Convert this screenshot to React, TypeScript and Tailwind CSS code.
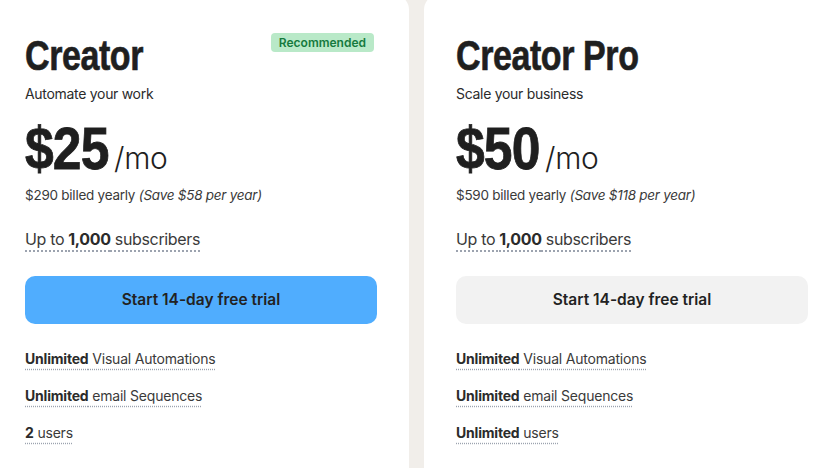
import React from 'react';

type Plan = {
  name: string;
  tagline: string;
  price: string;
  yearly: string;
  save: string;
  recommended?: boolean;
  primary?: boolean;
  features: [string, string][];
};

const plans: Plan[] = [
  {
    name: 'Creator',
    tagline: 'Automate your work',
    price: '$25',
    yearly: '$290 billed yearly',
    save: '(Save $58 per year)',
    recommended: true,
    primary: true,
    features: [
      ['Unlimited', 'Visual Automations'],
      ['Unlimited', 'email Sequences'],
      ['2', 'users'],
    ],
  },
  {
    name: 'Creator Pro',
    tagline: 'Scale your business',
    price: '$50',
    yearly: '$590 billed yearly',
    save: '(Save $118 per year)',
    features: [
      ['Unlimited', 'Visual Automations'],
      ['Unlimited', 'email Sequences'],
      ['Unlimited', 'users'],
    ],
  },
];

const body = "font-['Inter','Liberation_Sans',sans-serif]";
const heading = "font-['Liberation_Sans','Arial',sans-serif]";

function PlanCard({ plan }: { plan: Plan }) {
  return (
    <div className="relative w-[416px] shrink-0 bg-white rounded-t-[16px] px-8 pt-[41px] h-[520px]">
      {plan.recommended && (
        <span className="absolute right-[35px] top-[39px] rounded-[4px] bg-[#b9e9c8] px-2 py-[2px] text-[12px] font-semibold text-[#167a3e] leading-[15px]">
          Recommended
        </span>
      )}
      <h2
        className={`${heading} inline-block origin-left scale-x-[0.79] whitespace-nowrap text-[43px] font-bold leading-[40px] tracking-[-0.5px] text-[#1f1f1f] [-webkit-text-stroke:0.7px_#1f1f1f]`}
      >
        {plan.name}
      </h2>
      <p className="mt-[8px] text-[14px] leading-[20px] tracking-[-0.3px] text-[#2b2b2b]">{plan.tagline}</p>

      <div className="mt-[14px] flex items-baseline">
        <span
          className={`${heading} inline-block w-[84px] origin-left scale-x-[0.86] whitespace-nowrap text-[60px] font-bold leading-[62px] tracking-[-1px] text-[#1f1f1f] [-webkit-text-stroke:0.8px_#1f1f1f]`}
        >
          {plan.price}
        </span>
        <span className="ml-[5px] text-[30px] font-light tracking-[-0.3px] text-[#1f1f1f]">/mo</span>
      </div>
      <p className="mt-[4px] text-[13.5px] leading-[20px] tracking-[-0.25px] text-[#3a3a3a]">
        {plan.yearly} <span className="italic">{plan.save}</span>
      </p>

      <p className="mt-[24px] text-[16px] leading-[20px] tracking-[-0.35px] text-[#3a3a3a]">
        <span className="underline decoration-dotted decoration-[#9ca3af] decoration-2 underline-offset-[5px]">
          Up to <span className="font-bold text-[#2b2b2b]">1,000</span> subscribers
        </span>
      </p>

      <button
        className={`mt-[27px] flex h-[48px] w-full items-center justify-center rounded-[10px] text-[15.5px] font-semibold text-[#222] ${
          plan.primary ? 'bg-[#50adfe]' : 'bg-[#f2f2f2]'
        }`}
      >
        Start 14-day free trial
      </button>

      <ul className="mt-[25px] flex flex-col gap-[17px]">
        {plan.features.map(([strong, rest], i) => (
          <li key={i} className="text-[14px] leading-[20px] tracking-[-0.2px] text-[#3a3a3a]">
            <span className="underline decoration-dotted decoration-[#9ca3af] underline-offset-[5px]">
              <span className="font-bold text-[#2b2b2b]">{strong}</span> {rest}
            </span>
          </li>
        ))}
      </ul>
    </div>
  );
}

export default function App() {
  return (
    <div className={`${body} h-[468px] w-[826px] overflow-hidden bg-[#f1eeea]`}>
      <div className="-ml-[7px] -mt-[6px] flex gap-[15px]">
        {plans.map((p) => (
          <PlanCard key={p.name} plan={p} />
        ))}
      </div>
    </div>
  );
}
